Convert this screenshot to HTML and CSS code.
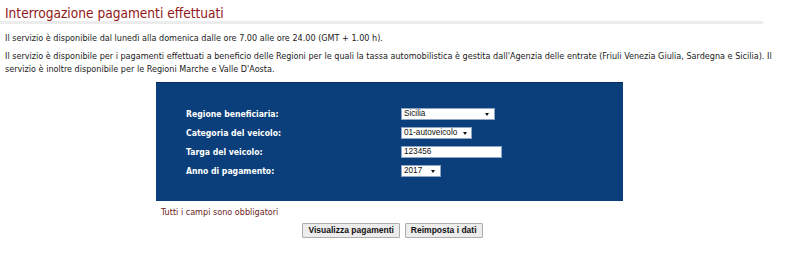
FILE: index.html
```html
<!DOCTYPE html>
<html lang="it">
<head>
    <meta charset="UTF-8">
    <meta name="viewport" content="width=device-width, initial-scale=1.0">
    <title>Interrogazione pagamenti effettuati</title>
    <link rel="stylesheet" href="styles.css">
</head>
<body>
    <h1 class="page-title">Interrogazione pagamenti effettuati</h1>

    <div class="intro">
        <p>Il servizio è disponibile dal lunedì alla domenica dalle ore 7.00 alle ore 24.00 (GMT + 1.00 h).</p>
        <p>Il servizio è disponibile per i pagamenti effettuati a beneficio delle Regioni per le quali la tassa automobilistica è gestita dall'Agenzia delle entrate (Friuli Venezia Giulia, Sardegna e Sicilia). Il servizio è inoltre disponibile per le Regioni Marche e Valle D'Aosta.</p>
    </div>

    <form id="searchForm">
        <div class="form-box">
            <div class="form-row">
                <label for="regione">Regione beneficiaria:</label>
                <span class="select-wrap select-regione">
                    <select id="regione" name="regione">
                        <option>Sicilia</option>
                        <option>Sardegna</option>
                        <option>Friuli Venezia Giulia</option>
                        <option>Marche</option>
                        <option>Valle D'Aosta</option>
                    </select>
                </span>
            </div>
            <div class="form-row">
                <label for="categoria">Categoria del veicolo:</label>
                <span class="select-wrap select-categoria">
                    <select id="categoria" name="categoria">
                        <option>01-autoveicolo</option>
                        <option>02-motoveicolo</option>
                    </select>
                </span>
            </div>
            <div class="form-row">
                <label for="targa">Targa del veicolo:</label>
                <input type="text" id="targa" name="targa" class="text-input" value="123456">
            </div>
            <div class="form-row">
                <label for="anno">Anno di pagamento:</label>
                <span class="select-wrap select-anno">
                    <select id="anno" name="anno">
                        <option>2017</option>
                        <option>2016</option>
                        <option>2015</option>
                    </select>
                </span>
            </div>
        </div>

        <p class="note">Tutti i campi sono obbligatori</p>

        <div class="buttons">
            <input type="submit" class="btn" value="Visualizza pagamenti">
            <input type="reset" class="btn" value="Reimposta i dati">
        </div>
    </form>
</body>
</html>
```

FILE: styles.css
```css
body {
    font-family: 'DejaVu Sans Condensed', 'DejaVu Sans', sans-serif;
    font-stretch: condensed;
    font-size: 9px;
    color: #222;
    background-color: #fff;
    margin: 0;
    padding: 0;
}
.page-title {
    font-size: 13.6px;
    font-weight: normal;
    color: #921616;
    width: 758px;
    margin: 0;
    padding: 5px 0 0 5px;
    line-height: 16px;
    border-bottom: 3px solid #ececec;
}
.intro {
    padding: 0 5px;
    margin-top: 8px;
}
.intro p {
    margin: 0 0 5px 0;
    line-height: 13px;
}
.form-box {
    width: 467px;
    height: 119px;
    margin: 6px 0 0 156px;
    padding: 21px 0 0 30px;
    background-color: #0b3f7b;
    border-top: 1px solid #062b58;
    box-sizing: border-box;
}
.form-row {
    display: flex;
    align-items: center;
    height: 19px;
}
.form-row label {
    width: 215px;
    color: #fff;
    font-weight: bold;
    font-size: 8.6px;
}
.select-wrap {
    position: relative;
    display: inline-block;
}
.select-wrap select,
.text-input {
    appearance: none;
    -webkit-appearance: none;
    font-family: 'Liberation Sans', Arial, sans-serif;
    font-size: 8.2px;
    color: #111;
    background-color: #fff;
    border: 1px solid #8ea6c4;
    border-radius: 0;
    height: 12px;
    padding: 0 0 0 2px;
    margin: 0;
    line-height: 10px;
    box-sizing: border-box;
    display: block;
}
.select-wrap::after {
    content: "";
    position: absolute;
    top: 5px;
    border-left: 2px solid transparent;
    border-right: 2px solid transparent;
    border-top: 3px solid #111;
    pointer-events: none;
}
.select-regione select { width: 94px; }
.select-regione::after { right: 6px; }
.select-categoria select { width: 71px; }
.select-categoria::after { right: 5px; }
.select-anno select { width: 40px; }
.select-anno::after { right: 6px; }
.text-input {
    width: 101px;
}
.note {
    color: #6e2323;
    margin: 6px 0 0 161px;
    line-height: 11px;
}
.buttons {
    width: 785px;
    display: flex;
    justify-content: center;
    gap: 5px;
    margin-top: 5px;
}
.btn {
    font-family: 'Liberation Sans', Arial, sans-serif;
    font-weight: bold;
    font-size: 8.5px;
    color: #111;
    background-color: #ececec;
    border: 1px solid #adadad;
    border-radius: 1px;
    height: 15px;
    padding: 0 5px;
    line-height: 13px;
}
```
